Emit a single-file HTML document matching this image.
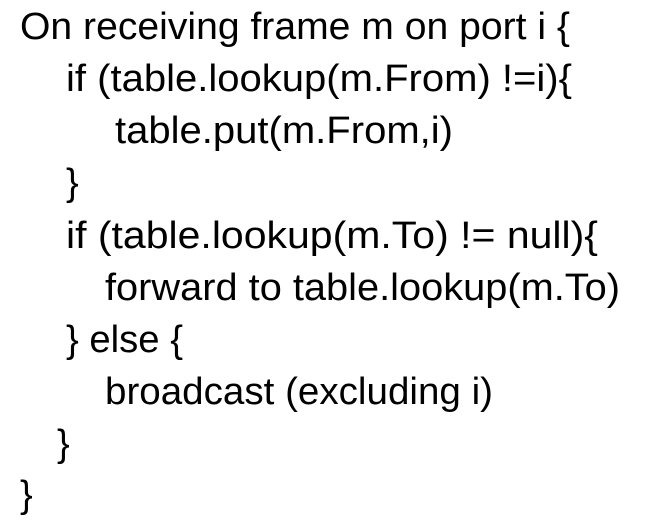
<!DOCTYPE html>
<html><head><meta charset="utf-8">
<style>
html,body{margin:0;padding:0;background:#fff;width:648px;height:529px;overflow:hidden}
.l{position:absolute;font-family:"Liberation Sans",sans-serif;font-size:38px;line-height:1;color:#000;white-space:pre;transform-origin:0 0}
</style></head><body>
<div class="l" data-w="550" style="left:20px;top:8px">On receiving frame m on port i {</div>
<div class="l" data-w="506" style="left:66px;top:60px">if (table.lookup(m.From) !=i){</div>
<div class="l" data-w="338" style="left:115px;top:112px">table.put(m.From,i)</div>
<div class="l" data-w="12" style="left:66px;top:164px">}</div>
<div class="l" data-w="532" style="left:66px;top:217px">if (table.lookup(m.To) != null){</div>
<div class="l" data-w="515" style="left:105px;top:269px">forward to table.lookup(m.To)</div>
<div class="l" data-w="117" style="left:66px;top:321px">} else {</div>
<div class="l" data-w="388" style="left:105px;top:373px">broadcast (excluding i)</div>
<div class="l" data-w="15" style="left:57px;top:425px">}</div>
<div class="l" data-w="15" style="left:20px;top:476px">}</div>
<script>
document.querySelectorAll('.l').forEach(function(e){
  var w=e.getBoundingClientRect().width, t=+e.getAttribute('data-w');
  if(w>0&&t>20) e.style.transform='scaleX('+(t/w)+')';
});
</script>
</body></html>
